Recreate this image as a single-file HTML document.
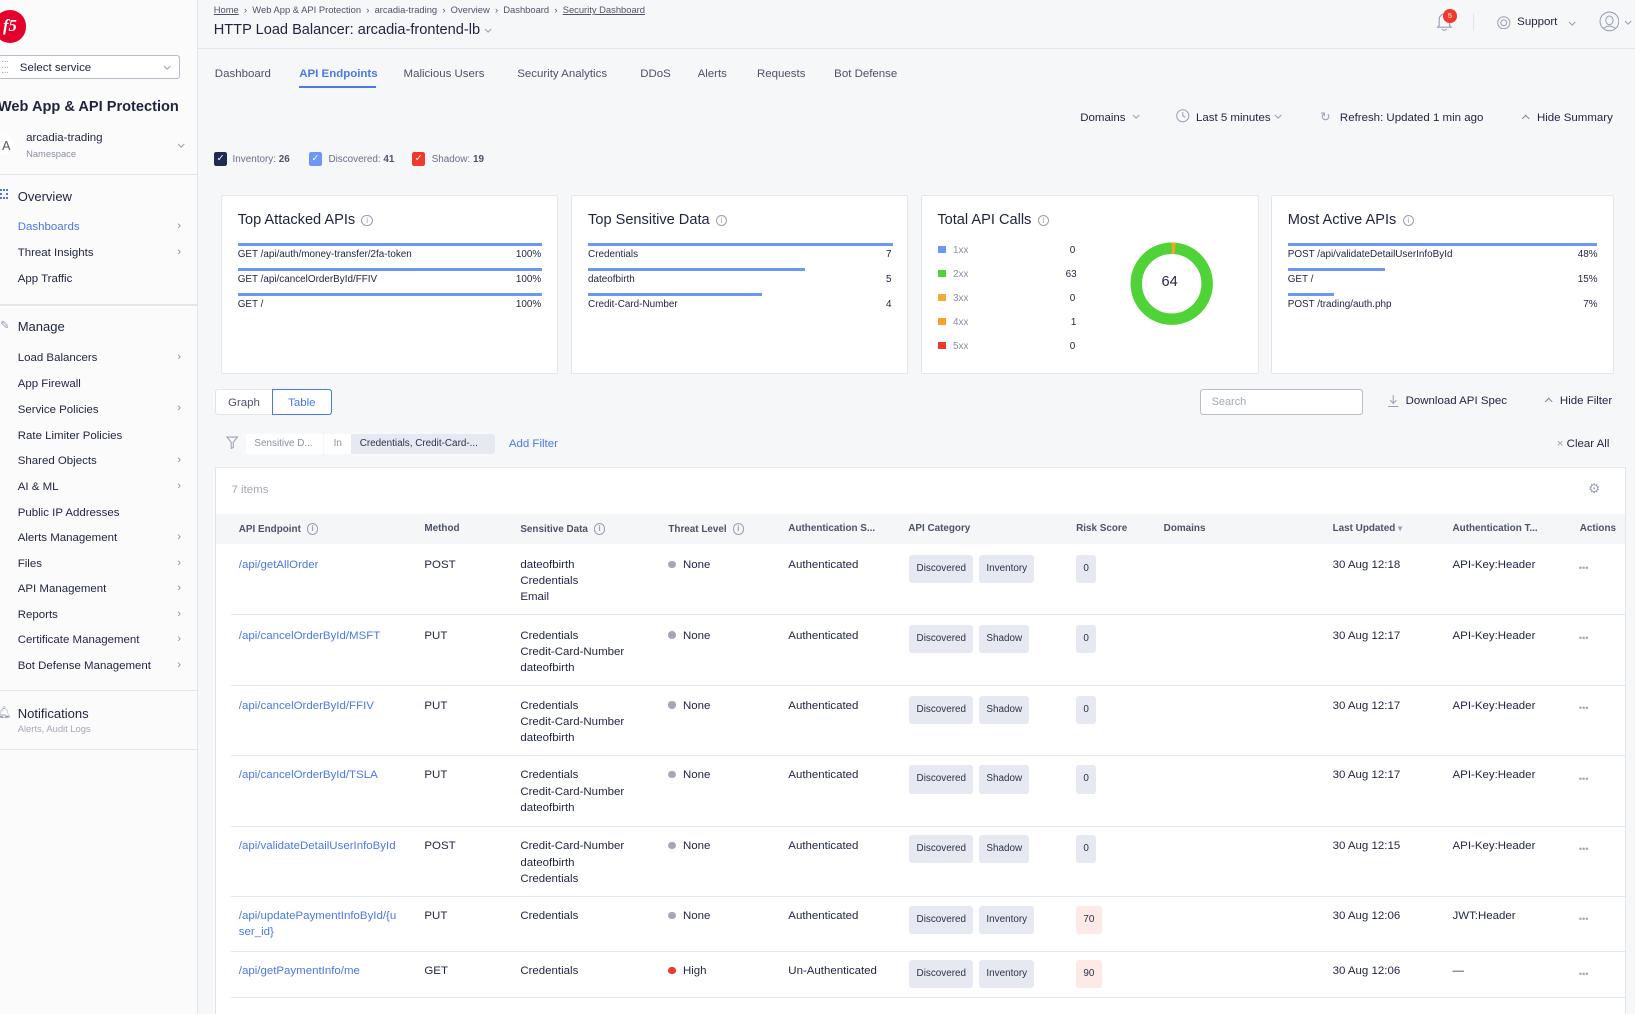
<!DOCTYPE html>
<html><head><meta charset="utf-8"><style>
*{box-sizing:border-box;margin:0;padding:0}
html,body{width:1635px;height:1014px;overflow:hidden;background:#f6f7f9}
#w{zoom:1.04273;width:1568px;height:972px;position:relative;font-family:"Liberation Sans",sans-serif;color:#1f2340;font-size:11px}
.a{position:absolute;white-space:nowrap}
.sb{position:absolute;left:0;top:0;width:190px;height:972px;background:#fbfbfc;border-right:1px solid #e3e5ea}
.hr{position:absolute;left:0;width:189px;height:1px;background:#e3e5ea}
.it{position:absolute;left:17px;font-size:11px;color:#1f2340;margin-top:1px}
.chev{position:absolute;left:170px;color:#8a8fa3;font-size:11px}
.card{position:absolute;top:187px;height:172px;background:#fff;border:1px solid #e3e5ea;border-radius:2px}
.ct{position:absolute;left:15px;top:15px;font-size:14px;color:#1f2340}
.info{display:inline-block;width:11px;height:11px;border:1px solid #9aa0b3;border-radius:50%;font-size:8px;line-height:9px;text-align:center;color:#9aa0b3;vertical-align:1px;margin-left:6px}
.bar{position:absolute;height:3px;background:#6d97f4}
.sm{position:absolute;font-size:9.5px;color:#1f2340;white-space:nowrap}
.th{position:absolute;top:502px;font-size:9.5px;font-weight:bold;color:#4d5268;white-space:nowrap}
.td{position:absolute;font-size:11px;line-height:15.5px;color:#1f2340;white-space:nowrap}
.lk{color:#4a78e8}
.tag{position:absolute;height:27px;line-height:27px;padding:0 7px;background:#e6e9f1;border-radius:3px;font-size:9.5px;color:#2d3248}
.dot{display:inline-block;width:7px;height:7px;border-radius:50%;background:#a4a8b6;margin-right:7px;vertical-align:0}
.rl{position:absolute;left:222px;width:1336px;height:1px;background:#e5e7ee}
.dots{position:absolute;left:1514px;color:#a4a8b6;font-size:9px;letter-spacing:0px}
svg.cv{display:inline-block;vertical-align:1px}
</style></head><body><div id="w">
<svg width="0" height="0" style="position:absolute"><defs><symbol id="cv" viewBox="0 0 8 5"><path d="M1 1 L4 4 L7 1" fill="none" stroke="#9aa0b3" stroke-width="1"/></symbol><symbol id="rt" viewBox="0 0 5 8"><path d="M1 1 L4 4 L1 7" fill="none" stroke="#8a8fa3" stroke-width="1"/></symbol></defs></svg>
<div class="sb"></div>
<div class="a" style="left:-6px;top:10px;width:31px;height:31px;border-radius:50%;background:#e4002b;color:#fff;font:bold 16px 'Liberation Serif',serif;text-align:center;line-height:31px;font-style:italic">f5</div>
<div class="a" style="left:-2px;top:53px;width:175px;height:23px;border:1px solid #b8bccb;border-radius:3px;background:#fff"></div>
<div class="a" style="left:1px;top:57px;color:#9aa0b3;font-size:10px;letter-spacing:-1px;line-height:5px">···<br>···<br>···</div>
<div class="a" style="left:19px;top:59px;font-size:11px">Select service</div>
<svg class="a" style="left:156px;top:62px" width="8" height="5"><use href="#cv"/></svg>
<div class="a" style="left:-2px;top:95px;font-size:14px;font-weight:bold">Web App &amp; API Protection</div>
<div class="a" style="left:-8px;top:129px;width:20px;height:20px;border-radius:50%;background:#fff"></div>
<div class="a" style="left:2px;top:133px;font-size:12px;color:#555">A</div>
<div class="a" style="left:25px;top:127px;font-size:11px">arcadia-trading</div>
<div class="a" style="left:25px;top:143px;font-size:9px;color:#8a8fa3">Namespace</div>
<svg class="a" style="left:170px;top:137px" width="8" height="5"><use href="#cv"/></svg>
<div class="hr" style="top:167px"></div>
<div class="a" style="left:0px;top:181px;width:8px;height:10px;border:2px dotted #4a78e8"></div>
<div class="a" style="left:17px;top:181px;font-size:12.5px">Overview</div>
<div class="it" style="top:211px;color:#4a78e8">Dashboards</div><div class="chev" style="top:211px">›</div>
<div class="it" style="top:236px">Threat Insights</div><div class="chev" style="top:236px">›</div>
<div class="it" style="top:261px">App Traffic</div>
<div class="hr" style="top:292px"></div>
<div class="a" style="left:0px;top:305px;color:#9aa0b3">✎</div>
<div class="a" style="left:17px;top:306px;font-size:12.5px">Manage</div>
<div class="it" style="top:337px">Load Balancers</div><div class="chev" style="top:337px">›</div>
<div class="it" style="top:362px">App Firewall</div>
<div class="it" style="top:386px">Service Policies</div><div class="chev" style="top:386px">›</div>
<div class="it" style="top:411px">Rate Limiter Policies</div>
<div class="it" style="top:435px">Shared Objects</div><div class="chev" style="top:435px">›</div>
<div class="it" style="top:460px">AI &amp; ML</div><div class="chev" style="top:460px">›</div>
<div class="it" style="top:485px">Public IP Addresses</div>
<div class="it" style="top:509px">Alerts Management</div><div class="chev" style="top:509px">›</div>
<div class="it" style="top:534px">Files</div><div class="chev" style="top:534px">›</div>
<div class="it" style="top:558px">API Management</div><div class="chev" style="top:558px">›</div>
<div class="it" style="top:583px">Reports</div><div class="chev" style="top:583px">›</div>
<div class="it" style="top:607px">Certificate Management</div><div class="chev" style="top:607px">›</div>
<div class="it" style="top:632px">Bot Defense Management</div><div class="chev" style="top:632px">›</div>
<div class="hr" style="top:662px"></div>
<div class="a" style="left:-3px;top:676px;color:#9aa0b3">🔔︎</div>
<div class="a" style="left:17px;top:677px;font-size:12.5px">Notifications</div>
<div class="a" style="left:17px;top:694px;font-size:9px;color:#a4a8b6">Alerts, Audit Logs</div>
<div class="hr" style="top:718px"></div>

<div class="a" style="left:190px;top:46px;width:1378px;height:1px;background:#e3e5ea"></div>
<div class="a" style="left:205px;top:5px;font-size:9px;color:#4d5268"><u>Home</u> &nbsp;›&nbsp; Web App &amp; API Protection &nbsp;›&nbsp; arcadia-trading &nbsp;›&nbsp; Overview &nbsp;›&nbsp; Dashboard &nbsp;›&nbsp; <u>Security Dashboard</u></div>
<div class="a" style="left:205px;top:21px;font-size:14px">HTTP Load Balancer: arcadia-frontend-lb <svg class="cv" width="8" height="5"><use href="#cv"/></svg></div>
<svg class="a" style="left:1376px;top:11px" width="18" height="20" viewBox="0 0 18 20"><path d="M4 14 V8 a5 5 0 0 1 10 0 V14 L15.5 15.5 H2.5 Z" fill="none" stroke="#9aa0b3" stroke-width="1.1"/><path d="M7 17 a2 1.5 0 0 0 4 0" fill="none" stroke="#9aa0b3" stroke-width="1.1"/></svg>
<div class="a" style="left:1384px;top:9px;width:13px;height:13px;border-radius:50%;background:#f0392b;color:#fff;font-size:7px;text-align:center;line-height:13px">5</div>
<div class="a" style="left:1413px;top:12px;width:1px;height:18px;background:#e3e5ea"></div>
<svg class="a" style="left:1436px;top:15px" width="13" height="13" viewBox="0 0 13 13"><circle cx="6.5" cy="6.5" r="5.8" fill="none" stroke="#9aa0b3"/><circle cx="6.5" cy="6.5" r="2.8" fill="none" stroke="#9aa0b3"/></svg>
<div class="a" style="left:1455px;top:15px;font-size:11px">Support</div>
<svg class="a" style="left:1504px;top:20px" width="8" height="5"><use href="#cv"/></svg>
<svg class="a" style="left:1533px;top:11px" width="20" height="20" viewBox="0 0 20 20"><circle cx="10" cy="10" r="9" fill="none" stroke="#9aa0b3"/><ellipse cx="10" cy="9" rx="3.5" ry="4.2" fill="none" stroke="#9aa0b3"/><path d="M4.5 16.5 Q10 12.5 15.5 16.5" fill="none" stroke="#9aa0b3"/></svg>
<svg class="a" style="left:1557px;top:19px" width="8" height="5"><use href="#cv"/></svg>

<div class="a" style="left:206px;top:65px;font-size:11px;color:#4d5268">Dashboard</div>
<div class="a" style="left:287px;top:65px;font-size:11px;color:#4a78e8;font-weight:bold">API Endpoints</div>
<div class="a" style="left:287px;top:82px;width:74px;height:2px;background:#4a78e8"></div>
<div class="a" style="left:387px;top:65px;font-size:11px;color:#4d5268">Malicious Users</div>
<div class="a" style="left:496px;top:65px;font-size:11px;color:#4d5268">Security Analytics</div>
<div class="a" style="left:614px;top:65px;font-size:11px;color:#4d5268">DDoS</div>
<div class="a" style="left:669px;top:65px;font-size:11px;color:#4d5268">Alerts</div>
<div class="a" style="left:726px;top:65px;font-size:11px;color:#4d5268">Requests</div>
<div class="a" style="left:800px;top:65px;font-size:11px;color:#4d5268">Bot Defense</div>

<div class="a" style="left:1036px;top:107px;font-size:11px">Domains &nbsp;<svg class="cv" width="8" height="5"><use href="#cv"/></svg></div>
<svg class="a" style="left:1128px;top:105px" width="13" height="13" viewBox="0 0 13 13"><circle cx="6.5" cy="6.5" r="5.8" fill="none" stroke="#9aa0b3"/><path d="M6.5 3 V6.5 L9 8" fill="none" stroke="#9aa0b3"/></svg>
<div class="a" style="left:1147px;top:107px;font-size:11px">Last 5 minutes <svg class="cv" width="8" height="5"><use href="#cv"/></svg></div>
<div class="a" style="left:1266px;top:105px;font-size:12px;color:#9aa0b3">↻</div>
<div class="a" style="left:1285px;top:107px;font-size:11px">Refresh: Updated 1 min ago</div>
<svg class="a" style="left:1459px;top:109px" width="9" height="6" viewBox="0 0 8 5"><path d="M1 4 L4 1 L7 4" fill="none" stroke="#8a8fa3"/></svg>
<div class="a" style="left:1474px;top:107px;font-size:11px">Hide Summary</div>

<div class="a" style="left:205px;top:146px;width:13px;height:13px;background:#1f2a55;border-radius:2px;color:#fff;font-size:9px;text-align:center;line-height:13px">✓</div>
<div class="a" style="left:223px;top:148px;font-size:9.5px;color:#6b7088">Inventory: <b style="color:#4d5268">26</b></div>
<div class="a" style="left:296px;top:146px;width:13px;height:13px;background:#6d97f4;border-radius:2px;color:#fff;font-size:9px;text-align:center;line-height:13px">✓</div>
<div class="a" style="left:315px;top:148px;font-size:9.5px;color:#6b7088">Discovered: <b style="color:#4d5268">41</b></div>
<div class="a" style="left:395px;top:146px;width:13px;height:13px;background:#f0392b;border-radius:2px;color:#fff;font-size:9px;text-align:center;line-height:13px">✓</div>
<div class="a" style="left:414px;top:148px;font-size:9.5px;color:#6b7088">Shadow: <b style="color:#4d5268">19</b></div>

<div class="card" style="left:212px;width:323px">
<div class="ct">Top Attacked APIs<span class="info">i</span></div>
<div class="bar" style="left:15px;top:45px;width:292px"></div><div class="sm" style="left:15px;top:51px">GET /api/auth/money-transfer/2fa-token</div><div class="sm" style="right:15px;top:51px">100%</div>
<div class="bar" style="left:15px;top:69px;width:292px"></div><div class="sm" style="left:15px;top:75px">GET /api/cancelOrderById/FFIV</div><div class="sm" style="right:15px;top:75px">100%</div>
<div class="bar" style="left:15px;top:93px;width:292px"></div><div class="sm" style="left:15px;top:99px">GET /</div><div class="sm" style="right:15px;top:99px">100%</div>
</div>
<div class="card" style="left:548px;width:323px">
<div class="ct">Top Sensitive Data<span class="info">i</span></div>
<div class="bar" style="left:15px;top:45px;width:292px"></div><div class="sm" style="left:15px;top:51px">Credentials</div><div class="sm" style="right:15px;top:51px">7</div>
<div class="bar" style="left:15px;top:69px;width:208px"></div><div class="sm" style="left:15px;top:75px">dateofbirth</div><div class="sm" style="right:15px;top:75px">5</div>
<div class="bar" style="left:15px;top:93px;width:167px"></div><div class="sm" style="left:15px;top:99px">Credit-Card-Number</div><div class="sm" style="right:15px;top:99px">4</div>
</div>
<div class="card" style="left:883px;width:324px">
<div class="ct">Total API Calls<span class="info">i</span></div>
<div class="a" style="left:16px;top:48px;width:7px;height:7px;background:#6d97f4"></div><div class="sm" style="left:30px;top:47px;color:#8a8fa3">1xx</div><div class="sm" style="left:142px;top:47px">0</div>
<div class="a" style="left:16px;top:71px;width:7px;height:7px;background:#4fd337"></div><div class="sm" style="left:30px;top:70px;color:#8a8fa3">2xx</div><div class="sm" style="left:138px;top:70px">63</div>
<div class="a" style="left:16px;top:94px;width:7px;height:7px;background:#f0ac3a"></div><div class="sm" style="left:30px;top:93px;color:#8a8fa3">3xx</div><div class="sm" style="left:142px;top:93px">0</div>
<div class="a" style="left:16px;top:117px;width:7px;height:7px;background:#f8a02a"></div><div class="sm" style="left:30px;top:116px;color:#8a8fa3">4xx</div><div class="sm" style="left:143px;top:116px">1</div>
<div class="a" style="left:16px;top:140px;width:7px;height:7px;background:#f0392b"></div><div class="sm" style="left:30px;top:139px;color:#8a8fa3">5xx</div><div class="sm" style="left:142px;top:139px">0</div>
<svg class="a" style="left:200px;top:44px" width="80" height="80" viewBox="0 0 80 80"><circle cx="40" cy="40" r="34" fill="none" stroke="#4fd337" stroke-width="11"/><path d="M40 6 A34 34 0 0 1 43.3 6.2" fill="none" stroke="#f8a02a" stroke-width="11"/></svg>
<div class="a" style="left:230px;top:75px;font-size:14px">64</div>
</div>
<div class="card" style="left:1219px;width:329px">
<div class="ct">Most Active APIs<span class="info">i</span></div>
<div class="bar" style="left:15px;top:45px;width:297px"></div><div class="sm" style="left:15px;top:51px">POST /api/validateDetailUserInfoById</div><div class="sm" style="right:15px;top:51px">48%</div>
<div class="bar" style="left:15px;top:69px;width:93px"></div><div class="sm" style="left:15px;top:75px">GET /</div><div class="sm" style="right:15px;top:75px">15%</div>
<div class="bar" style="left:15px;top:93px;width:44px"></div><div class="sm" style="left:15px;top:99px">POST /trading/auth.php</div><div class="sm" style="right:15px;top:99px">7%</div>
</div>

<div class="a" style="left:206px;top:373px;width:56px;height:25px;background:#fff;border:1px solid #e3e5ea;border-radius:3px 0 0 3px;text-align:center;line-height:25px;font-size:11px;color:#4d5268">Graph</div>
<div class="a" style="left:261px;top:373px;width:57px;height:25px;background:#fff;border:1px solid #4a78e8;border-radius:0 3px 3px 0;text-align:center;line-height:25px;font-size:11px;color:#4a78e8">Table</div>
<div class="a" style="left:1151px;top:373px;width:156px;height:25px;background:#fff;border:1px solid #b8bccb;border-radius:3px;padding-left:10px;line-height:24px;font-size:10.5px;color:#a4a8b6">Search</div>
<svg class="a" style="left:1330px;top:378px" width="12" height="13" viewBox="0 0 12 13"><path d="M6 1 V9 M3 6 L6 9 L9 6 M1 12 H11" fill="none" stroke="#9aa0b3"/></svg>
<div class="a" style="left:1348px;top:379px;font-size:11px">Download API Spec</div>
<svg class="a" style="left:1481px;top:381px" width="9" height="6" viewBox="0 0 8 5"><path d="M1 4 L4 1 L7 4" fill="none" stroke="#8a8fa3"/></svg>
<div class="a" style="left:1496px;top:379px;font-size:11px">Hide Filter</div>

<svg class="a" style="left:217px;top:418px" width="12" height="13" viewBox="0 0 12 13"><path d="M1 1 H11 L7 6 V11 L5 12 V6 Z" fill="none" stroke="#9aa0b3"/></svg>
<div class="a" style="left:236px;top:416px;width:74px;height:19px;background:#fff;font-size:9.5px;color:#8a8fa3;line-height:19px;padding-left:8px">Sensitive D...</div>
<div class="a" style="left:311px;top:416px;width:26px;height:19px;background:#fff;font-size:9.5px;color:#8a8fa3;line-height:19px;padding-left:9px">In</div>
<div class="a" style="left:337px;top:416px;width:138px;height:19px;background:#e6e9f1;border-radius:0 3px 3px 0;font-size:9.5px;color:#2d3248;line-height:19px;padding-left:8px">Credentials, Credit-Card-...</div>
<div class="a" style="left:488px;top:420px;font-size:11px;color:#4a78e8">Add Filter</div>
<div class="a" style="left:1493px;top:420px;font-size:11px"><span style="color:#9aa0b3">×</span> Clear All</div>

<div class="a" style="left:206px;top:448px;width:1353px;height:530px;background:#fff;border:1px solid #e3e5ea"></div>
<div class="a" style="left:222px;top:464px;font-size:11px;color:#a4a8b6">7 items</div>
<div class="a" style="left:1523px;top:461px;font-size:13px;color:#9aa0b3">⚙</div>
<div class="a" style="left:207px;top:493px;width:1351px;height:29px;background:#f5f6f8"></div>
<div class="th" style="left:229px">API Endpoint <span class="info" style="margin-left:3px">i</span></div>
<div class="th" style="left:407px">Method</div>
<div class="th" style="left:499px">Sensitive Data <span class="info" style="margin-left:3px">i</span></div>
<div class="th" style="left:641px">Threat Level <span class="info" style="margin-left:3px">i</span></div>
<div class="th" style="left:756px">Authentication S...</div>
<div class="th" style="left:871px">API Category</div>
<div class="th" style="left:1032px">Risk Score</div>
<div class="th" style="left:1116px">Domains</div>
<div class="th" style="left:1278px">Last Updated <span style="color:#9aa0b3;font-size:8px">▾</span></div>
<div class="th" style="left:1393px">Authentication T...</div>
<div class="th" style="left:1515px">Actions</div>

<div class="td lk" style="left:229px;top:534px">/api/getAllOrder</div>
<div class="td" style="left:407px;top:534px">POST</div>
<div class="td" style="left:499px;top:534px">dateofbirth<br>Credentials<br>Email</div>
<div class="td" style="left:641px;top:534px"><span class="dot"></span>None</div>
<div class="td" style="left:756px;top:534px">Authenticated</div>
<div class="tag" style="left:872px;top:532px">Discovered</div><div class="tag" style="left:939px;top:532px">Inventory</div>
<div class="tag" style="left:1032px;top:532px">0</div>
<div class="td" style="left:1278px;top:534px">30 Aug 12:18</div>
<div class="td" style="left:1393px;top:534px">API-Key:Header</div>
<div class="dots" style="top:540px">•••</div>
<div class="rl" style="top:589px"></div>

<div class="td lk" style="left:229px;top:602px">/api/cancelOrderById/MSFT</div>
<div class="td" style="left:407px;top:602px">PUT</div>
<div class="td" style="left:499px;top:602px">Credentials<br>Credit-Card-Number<br>dateofbirth</div>
<div class="td" style="left:641px;top:602px"><span class="dot"></span>None</div>
<div class="td" style="left:756px;top:602px">Authenticated</div>
<div class="tag" style="left:872px;top:599px">Discovered</div><div class="tag" style="left:939px;top:599px">Shadow</div>
<div class="tag" style="left:1032px;top:599px">0</div>
<div class="td" style="left:1278px;top:602px">30 Aug 12:17</div>
<div class="td" style="left:1393px;top:602px">API-Key:Header</div>
<div class="dots" style="top:607px">•••</div>
<div class="rl" style="top:657px"></div>

<div class="td lk" style="left:229px;top:669px">/api/cancelOrderById/FFIV</div>
<div class="td" style="left:407px;top:669px">PUT</div>
<div class="td" style="left:499px;top:669px">Credentials<br>Credit-Card-Number<br>dateofbirth</div>
<div class="td" style="left:641px;top:669px"><span class="dot"></span>None</div>
<div class="td" style="left:756px;top:669px">Authenticated</div>
<div class="tag" style="left:872px;top:667px">Discovered</div><div class="tag" style="left:939px;top:667px">Shadow</div>
<div class="tag" style="left:1032px;top:667px">0</div>
<div class="td" style="left:1278px;top:669px">30 Aug 12:17</div>
<div class="td" style="left:1393px;top:669px">API-Key:Header</div>
<div class="dots" style="top:674px">•••</div>
<div class="rl" style="top:724px"></div>

<div class="td lk" style="left:229px;top:736px">/api/cancelOrderById/TSLA</div>
<div class="td" style="left:407px;top:736px">PUT</div>
<div class="td" style="left:499px;top:736px">Credentials<br>Credit-Card-Number<br>dateofbirth</div>
<div class="td" style="left:641px;top:736px"><span class="dot"></span>None</div>
<div class="td" style="left:756px;top:736px">Authenticated</div>
<div class="tag" style="left:872px;top:734px">Discovered</div><div class="tag" style="left:939px;top:734px">Shadow</div>
<div class="tag" style="left:1032px;top:734px">0</div>
<div class="td" style="left:1278px;top:736px">30 Aug 12:17</div>
<div class="td" style="left:1393px;top:736px">API-Key:Header</div>
<div class="dots" style="top:742px">•••</div>
<div class="rl" style="top:792px"></div>

<div class="td lk" style="left:229px;top:804px">/api/validateDetailUserInfoById</div>
<div class="td" style="left:407px;top:804px">POST</div>
<div class="td" style="left:499px;top:804px">Credit-Card-Number<br>dateofbirth<br>Credentials</div>
<div class="td" style="left:641px;top:804px"><span class="dot"></span>None</div>
<div class="td" style="left:756px;top:804px">Authenticated</div>
<div class="tag" style="left:872px;top:801px">Discovered</div><div class="tag" style="left:939px;top:801px">Shadow</div>
<div class="tag" style="left:1032px;top:801px">0</div>
<div class="td" style="left:1278px;top:804px">30 Aug 12:15</div>
<div class="td" style="left:1393px;top:804px">API-Key:Header</div>
<div class="dots" style="top:809px">•••</div>
<div class="rl" style="top:859px"></div>

<div class="td lk" style="left:229px;top:871px">/api/updatePaymentInfoById/{u<br>ser_id}</div>
<div class="td" style="left:407px;top:871px">PUT</div>
<div class="td" style="left:499px;top:871px">Credentials</div>
<div class="td" style="left:641px;top:871px"><span class="dot"></span>None</div>
<div class="td" style="left:756px;top:871px">Authenticated</div>
<div class="tag" style="left:872px;top:869px">Discovered</div><div class="tag" style="left:939px;top:869px">Inventory</div>
<div class="tag" style="left:1032px;top:869px;background:#fdeae6">70</div>
<div class="td" style="left:1278px;top:871px">30 Aug 12:06</div>
<div class="td" style="left:1393px;top:871px">JWT:Header</div>
<div class="dots" style="top:877px">•••</div>
<div class="rl" style="top:912px"></div>

<div class="td lk" style="left:229px;top:924px">/api/getPaymentInfo/me</div>
<div class="td" style="left:407px;top:924px">GET</div>
<div class="td" style="left:499px;top:924px">Credentials</div>
<div class="td" style="left:641px;top:924px"><span class="dot" style="background:#f0392b"></span>High</div>
<div class="td" style="left:756px;top:924px">Un-Authenticated</div>
<div class="tag" style="left:872px;top:921px">Discovered</div><div class="tag" style="left:939px;top:921px">Inventory</div>
<div class="tag" style="left:1032px;top:921px;background:#fdeae6">90</div>
<div class="td" style="left:1278px;top:924px">30 Aug 12:06</div>
<div class="td" style="left:1393px;top:924px">—</div>
<div class="dots" style="top:929px">•••</div>
<div class="rl" style="top:956px"></div>
</div></body></html>
